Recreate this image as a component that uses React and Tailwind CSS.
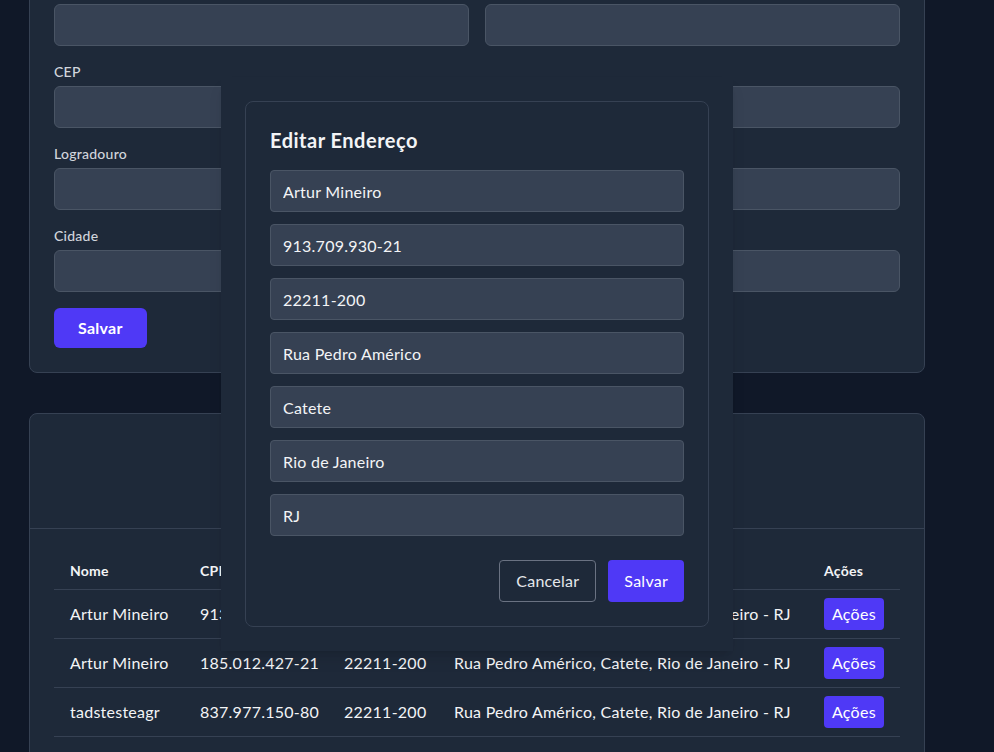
import React from "react";

const rows = [
  ["Artur Mineiro", "913.709.930-21", "22211-200", "Rua Pedro Américo, Catete, Rio de Janeiro - RJ"],
  ["Artur Mineiro", "185.012.427-21", "22211-200", "Rua Pedro Américo, Catete, Rio de Janeiro - RJ"],
  ["tadstesteagr", "837.977.150-80", "22211-200", "Rua Pedro Américo, Catete, Rio de Janeiro - RJ"],
];

const modalValues = ["Artur Mineiro", "913.709.930-21", "22211-200", "Rua Pedro Américo", "Catete", "Rio de Janeiro", "RJ"];

function Field({ label }) {
  return (
    <div>
      {label ? (
        <label className="block text-sm font-medium text-gray-300 leading-5 mb-1">{label}</label>
      ) : (
        <div className="h-5 mb-1" />
      )}
      <input className="block w-full h-[42px] rounded-md bg-gray-700 border border-gray-600 px-3 text-base text-gray-100 outline-none" />
    </div>
  );
}

export default function App() {
  return (
    <div className="relative h-[752px] overflow-hidden bg-gray-900 font-[family-name:Lato,sans-serif] tracking-[0.25px] text-gray-100">
      <div className="pl-[29px] mt-[-45px]">
        <div className="w-[896px] rounded-lg border border-gray-700 bg-gray-800 p-6">
          <div className="flex flex-col gap-4">
            <div className="grid grid-cols-2 gap-4">
              <Field />
              <Field />
            </div>
            <Field label="CEP" />
            <Field label="Logradouro" />
            <Field label="Cidade" />
          </div>
          <button className="mt-4 h-10 rounded-md bg-indigo-600 px-6 text-base font-bold text-white">Salvar</button>
        </div>

        <div className="mt-10 w-[896px] rounded-lg border border-gray-700 bg-gray-800">
          <div className="h-[115px] border-b border-gray-700"></div>
          <div className="p-6">
            <table className="w-full table-fixed border-collapse text-left">
              <thead>
                <tr className="border-b border-gray-700">
                  <th className="w-[130px] px-4 py-2 text-sm font-bold leading-5">Nome</th>
                  <th className="w-[144px] px-4 py-2 text-sm font-bold leading-5">CPF</th>
                  <th className="w-[110px] px-4 py-2 text-sm font-bold leading-5">CEP</th>
                  <th className="w-[370px] px-4 py-2 text-sm font-bold leading-5">Endereço</th>
                  <th className="px-4 py-2 text-sm font-bold leading-5">Ações</th>
                </tr>
              </thead>
              <tbody>
                {rows.map((r, i) => (
                  <tr key={i} className="border-b border-gray-700">
                    <td className="px-4 py-2 text-base whitespace-nowrap">{r[0]}</td>
                    <td className="px-4 py-2 text-base whitespace-nowrap">{r[1]}</td>
                    <td className="px-4 py-2 text-base whitespace-nowrap">{r[2]}</td>
                    <td className="px-4 py-2 text-base whitespace-nowrap">{r[3]}</td>
                    <td className="px-4 py-2">
                      <button className="h-8 rounded-sm bg-indigo-600 px-2 text-base text-white">Ações</button>
                    </td>
                  </tr>
                ))}
              </tbody>
            </table>
          </div>
        </div>
      </div>

      <div className="absolute left-[221px] top-[77px] w-[512px] bg-gray-800 p-6 shadow-lg">
        <div className="rounded-lg border border-gray-700 bg-gray-800 p-6">
          <h2 className="mb-4 text-xl font-bold leading-7 tracking-[0.5px] text-gray-100">Editar Endereço</h2>
          <div className="flex flex-col gap-3">
            {modalValues.map((v, i) => (
              <input
                key={i}
                defaultValue={v}
                className="block w-full h-[42px] rounded bg-gray-700 border border-gray-600 px-3 text-base tracking-[0.25px] text-gray-100 outline-none"
              />
            ))}
          </div>
          <div className="mt-6 flex justify-end gap-3">
            <button className="h-[42px] rounded border border-gray-500 px-4 text-base text-gray-200">Cancelar</button>
            <button className="h-[42px] rounded bg-indigo-600 px-4 text-base text-white">Salvar</button>
          </div>
        </div>
      </div>
    </div>
  );
}
